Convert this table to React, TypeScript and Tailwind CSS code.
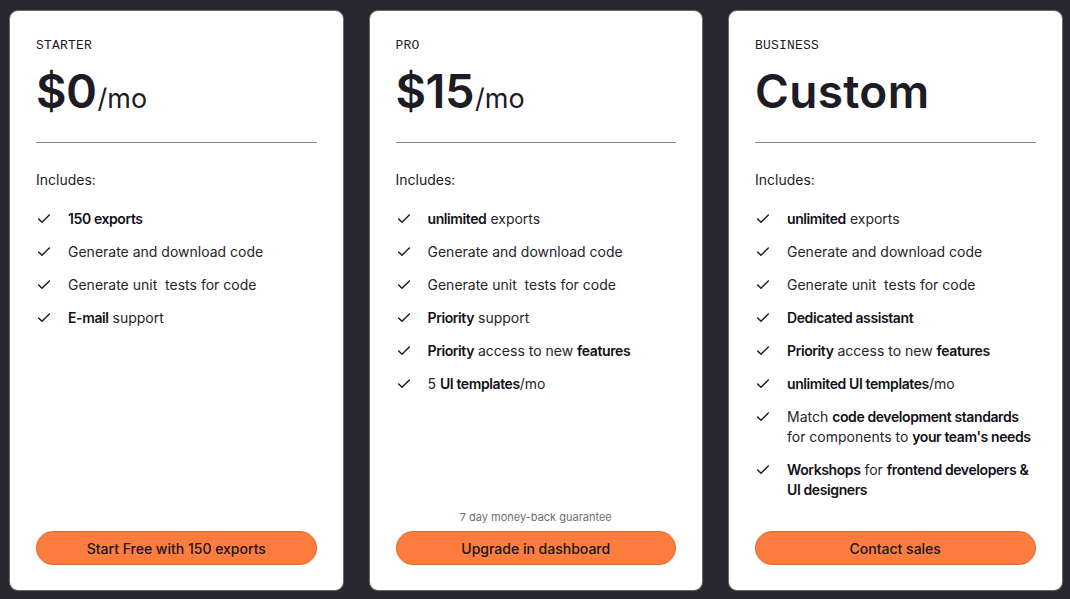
import React from "react";

type Seg = { t: string; b?: boolean; br?: boolean };
type Plan = {
  label: string;
  price: string;
  per?: boolean;
  items: Seg[][];
  note?: string;
  cta: string;
};

const plans: Plan[] = [
  {
    label: "STARTER",
    price: "$0",
    per: true,
    items: [
      [{ t: "150 exports", b: true }],
      [{ t: "Generate and download code" }],
      [{ t: "Generate unit\u00a0 tests for code" }],
      [{ t: "E-mail", b: true }, { t: " support" }],
    ],
    cta: "Start Free with 150 exports",
  },
  {
    label: "PRO",
    price: "$15",
    per: true,
    items: [
      [{ t: "unlimited", b: true }, { t: " exports" }],
      [{ t: "Generate and download code" }],
      [{ t: "Generate unit\u00a0 tests for code" }],
      [{ t: "Priority", b: true }, { t: " support" }],
      [{ t: "Priority", b: true }, { t: " access to new " }, { t: "features", b: true }],
      [{ t: "5 " }, { t: "UI templates", b: true }, { t: "/mo" }],
    ],
    note: "7 day money-back guarantee",
    cta: "Upgrade in dashboard",
  },
  {
    label: "BUSINESS",
    price: "Custom",
    items: [
      [{ t: "unlimited", b: true }, { t: " exports" }],
      [{ t: "Generate and download code" }],
      [{ t: "Generate unit\u00a0 tests for code" }],
      [{ t: "Dedicated assistant", b: true }],
      [{ t: "Priority", b: true }, { t: " access to new " }, { t: "features", b: true }],
      [{ t: "unlimited UI templates", b: true }, { t: "/mo" }],
      [
        { t: "Match " },
        { t: "code development standards", b: true },
        { t: "", br: true },
        { t: "for components to " },
        { t: "your team's needs", b: true },
      ],
      [
        { t: "Workshops", b: true },
        { t: " for " },
        { t: "frontend developers &", b: true },
        { t: "", br: true },
        { t: "UI designers", b: true },
      ],
    ],
    cta: "Contact sales",
  },
];

function Check() {
  return (
    <svg
      width="16"
      height="16"
      viewBox="0 0 24 24"
      fill="none"
      stroke="#1d1b24"
      strokeWidth="2.2"
      strokeLinecap="round"
      strokeLinejoin="round"
      className="shrink-0 mt-[2px]"
    >
      <path d="M20 6 9 17l-5-5" />
    </svg>
  );
}

function Card({ p }: { p: Plan }) {
  return (
    <div className="w-[334.5px] shrink-0 flex flex-col bg-white rounded-[9px] border border-[#6b6a72] px-[26px] pt-[27px] pb-[25px]">
      <div className="font-['Liberation_Mono',monospace] text-[13px] leading-[16px] tracking-[0.2px] text-[#1d1b24]">
        {p.label}
      </div>
      <div className="mt-[13px] flex items-baseline h-[48px] text-[#1d1b24]">
        <span
          className={
            p.per
              ? "text-[47px] leading-[48px] font-semibold tracking-[-0.5px]"
              : "text-[46px] leading-[48px] font-semibold tracking-[0.3px]"
          }
        >
          {p.price}
        </span>
        {p.per && <span className="text-[27px] leading-[48px] font-normal ml-[1px]">/mo</span>}
      </div>
      <div className="mt-[27px] h-px bg-[#8a8990]" />
      <div className="mt-[27px] text-[14px] leading-[20px] text-[#1d1b24]">Includes:</div>
      <ul className="mt-[19px] flex flex-col gap-[13px]">
        {p.items.map((segs, i) => (
          <li key={i} className="flex gap-[16px] text-[14px] leading-[20px] text-[#26242c] whitespace-nowrap">
            <Check />
            <span>
              {segs.map((s, j) =>
                s.br ? (
                  <br key={j} />
                ) : (
                  <span key={j} className={s.b ? "font-semibold tracking-[-0.4px] text-[#121118]" : ""}>
                    {s.t}
                  </span>
                )
              )}
            </span>
          </li>
        ))}
      </ul>
      <div className="flex-1" />
      {p.note && (
        <div className="text-center text-[11px] leading-[14px] text-[#6f6d75] mb-[7px]">{p.note}</div>
      )}
      <button className="h-[34px] w-full rounded-full bg-[#fe7d3e] border border-[#e0682c] text-[14px] font-medium text-[#17151c]">
        {p.cta}
      </button>
    </div>
  );
}

export default function App() {
  return (
    <div className="w-[1070px] h-[599px] bg-[#29272f] flex gap-[25px] pl-[9px] pr-[7px] pt-[10px] pb-[8px] font-['Inter',sans-serif]">
      {plans.map((p) => (
        <Card key={p.label} p={p} />
      ))}
    </div>
  );
}
